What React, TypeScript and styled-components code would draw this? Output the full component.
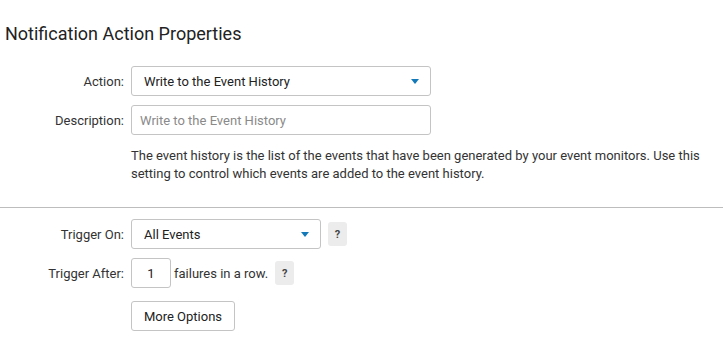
import styled, { createGlobalStyle } from 'styled-components';

const GlobalStyle = createGlobalStyle`
  body {
    margin: 0;
    background: #fff;
    font-family: Roboto, "Liberation Sans", sans-serif;
    color: #333;
  }
`;

const Page = styled.div`
  padding-top: 22px;
`;

const Title = styled.h2`
  margin: 0 0 20px 5px;
  font-size: 18px;
  font-weight: 400;
  line-height: 24px;
  color: #222;
`;

const Section = styled.div`
  display: flex;
  flex-direction: column;
  gap: 9px;
`;

const Row = styled.div`
  display: grid;
  grid-template-columns: 124px auto;
  column-gap: 7px;
  align-items: center;
`;

const Label = styled.label`
  text-align: right;
  font-size: 13px;
  color: #333;
`;

const Field = styled.div`
  display: flex;
  align-items: center;
  gap: 7px;
`;

const Select = styled.div<{ $width: number }>`
  box-sizing: border-box;
  width: ${(p) => p.$width}px;
  height: 30px;
  border: 1px solid #c4c4c4;
  border-radius: 3px;
  display: flex;
  align-items: center;
  justify-content: space-between;
  padding: 0 11px 0 12px;
  font-size: 13px;
  color: #222;
`;

const Caret = styled.span`
  width: 0;
  height: 0;
  border-left: 4.5px solid transparent;
  border-right: 4.5px solid transparent;
  border-top: 5px solid #1479b8;
`;

const TextInput = styled.div<{ $width: number; $placeholder?: boolean }>`
  box-sizing: border-box;
  width: ${(p) => p.$width}px;
  height: 30px;
  border: 1px solid #c4c4c4;
  border-radius: 3px;
  display: flex;
  align-items: center;
  padding: 0 8px;
  font-size: 13px;
  color: ${(p) => (p.$placeholder ? '#8a8a8a' : '#222')};
  justify-content: ${(p) => (p.$placeholder ? 'flex-start' : 'center')};
`;

const Help = styled.p`
  margin: 12px 0 0 131px;
  width: 585px;
  font-size: 13px;
  line-height: 18px;
  color: #333;
`;

const Divider = styled.hr`
  margin: 24px 0 11px;
  border: 0;
  border-top: 1px solid #bdbdbd;
`;

const HelpButton = styled.span`
  display: inline-flex;
  align-items: center;
  justify-content: center;
  width: 19px;
  height: 24px;
  border-radius: 3px;
  background: #ececec;
  font-size: 11px;
  font-weight: 700;
  color: #444;
`;

const Suffix = styled.span`
  font-size: 13px;
  color: #333;
  margin-left: -4px;
`;

const Button = styled.button`
  box-sizing: border-box;
  height: 30px;
  width: 104px;
  border: 1px solid #c4c4c4;
  border-radius: 3px;
  background: #fff;
  font-family: inherit;
  font-size: 13px;
  color: #222;
  margin-top: 4px;
`;

export default function App() {
  return (
    <Page>
      <GlobalStyle />
      <Title>Notification Action Properties</Title>
      <Section>
        <Row>
          <Label>Action:</Label>
          <Select $width={300}>
            Write to the Event History
            <Caret />
          </Select>
        </Row>
        <Row>
          <Label>Description:</Label>
          <TextInput $width={300} $placeholder>
            Write to the Event History
          </TextInput>
        </Row>
      </Section>
      <Help>
        The event history is the list of the events that have been generated by your event
        monitors. Use this setting to control which events are added to the event history.
      </Help>
      <Divider />
      <Section>
        <Row>
          <Label>Trigger On:</Label>
          <Field>
            <Select $width={190}>
              All Events
              <Caret />
            </Select>
            <HelpButton>?</HelpButton>
          </Field>
        </Row>
        <Row>
          <Label>Trigger After:</Label>
          <Field>
            <TextInput $width={40}>1</TextInput>
            <Suffix>failures in a row.</Suffix>
            <HelpButton>?</HelpButton>
          </Field>
        </Row>
        <Row>
          <span />
          <Field>
            <Button>More Options</Button>
          </Field>
        </Row>
      </Section>
    </Page>
  );
}
